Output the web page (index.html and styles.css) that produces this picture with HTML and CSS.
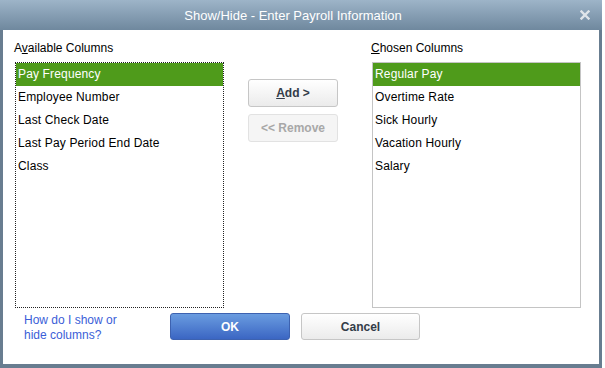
FILE: index.html
```html
<!DOCTYPE html>
<html lang="en">
<head>
    <meta charset="UTF-8">
    <title>Show/Hide - Enter Payroll Information</title>
    <link rel="stylesheet" href="styles.css">
</head>
<body>
    <div class="dialog">
        <!-- Title bar -->
        <div class="titlebar">
            <span class="title">Show/Hide - Enter Payroll Information</span>
            <svg class="close" width="10" height="10" viewBox="0 0 10 10">
                <path d="M1.5 1.5 L8.5 8.5 M8.5 1.5 L1.5 8.5" stroke="#dfe5ea" stroke-width="2.4" stroke-linecap="square"/>
            </svg>
        </div>

        <div class="content">
            <div class="columns">
                <div class="col">
                    <div class="label">A<u>v</u>ailable Columns</div>
                    <ul class="list focused">
                        <li class="selected">Pay Frequency</li>
                        <li>Employee Number</li>
                        <li>Last Check Date</li>
                        <li>Last Pay Period End Date</li>
                        <li>Class</li>
                    </ul>
                </div>

                <div class="middle">
                    <button class="btn"><u>A</u>dd &gt;</button>
                    <button class="btn" disabled>&lt;&lt; Remove</button>
                </div>

                <div class="col">
                    <div class="label"><u>C</u>hosen Columns</div>
                    <ul class="list">
                        <li class="selected">Regular Pay</li>
                        <li>Overtime Rate</li>
                        <li>Sick Hourly</li>
                        <li>Vacation Hourly</li>
                        <li>Salary</li>
                    </ul>
                </div>
            </div>

            <!-- Footer -->
            <div class="footer">
                <a class="help" href="#">How do I show or<br>hide columns?</a>
                <button class="btn primary">OK</button>
                <button class="btn cancel">Cancel</button>
            </div>
        </div>
    </div>
</body>
</html>
```

FILE: styles.css
```css
/* Basic Styling */
body {
    margin: 0;
    background-color: #ffffff;
    font-family: "Liberation Sans", Arial, sans-serif;
    font-size: 12px;
    color: #000;
}

.dialog {
    width: 602px;
    height: 368px;
    box-sizing: border-box;
    display: flex;
    flex-direction: column;
    border-left: 3px solid #687d90;
    border-right: 3px solid #687d90;
    border-bottom: 4px solid #687d90;
    background-color: #fff;
}

/* Title bar */
.titlebar {
    height: 30px;
    margin: 0 -3px;
    position: relative;
    display: flex;
    align-items: center;
    justify-content: center;
    background: linear-gradient(#9db4c8, #6f889e);
}

.title {
    color: #fff;
    font-size: 13px;
    margin-left: -16px;
}

.close {
    position: absolute;
    right: 12px;
    top: 10px;
}

/* Content */
.content {
    flex: 1;
    padding: 11px 0 0 12px;
}

.columns {
    display: grid;
    grid-template-columns: 209px 148px 209px;
}

.label {
    line-height: 14px;
    margin: 0 0 7px -1px;
}

.list {
    list-style: none;
    margin: 0;
    padding: 0;
    height: 246px;
    box-sizing: border-box;
    border: 1px solid #c4c4c4;
    letter-spacing: 0.15px;
}

.list.focused {
    border: 1px dotted #222;
}

.list li {
    height: 23px;
    line-height: 23px;
    padding-left: 2px;
}

.list li.selected {
    background-color: #4f9b1b;
    color: #fff;
}

/* Buttons */
.middle {
    display: flex;
    flex-direction: column;
    gap: 7px;
    padding: 38px 0 0 24px;
}

.btn {
    width: 90px;
    height: 28px;
    font-family: "Liberation Sans", Arial, sans-serif;
    font-size: 12px;
    font-weight: bold;
    color: #333c48;
    border: 1px solid #c6c6c6;
    border-radius: 3px;
    background: linear-gradient(#ffffff, #ebebeb);
    padding: 0;
}

.btn[disabled] {
    color: #a8a8a8;
    border-color: #e2e2e2;
    background: #f5f5f5;
}

.footer {
    display: flex;
    align-items: flex-start;
    padding-top: 5px;
}

.help {
    width: 146px;
    padding-left: 9px;
    line-height: 15px;
    color: #3b5ed8;
    text-decoration: none;
}

.primary {
    width: 120px;
    height: 27px;
    color: #fff;
    border-color: #3d62b0;
    background: linear-gradient(#6a9ce0, #3b66c3);
}

.cancel {
    width: 119px;
    height: 27px;
    margin-left: 11px;
}
```
